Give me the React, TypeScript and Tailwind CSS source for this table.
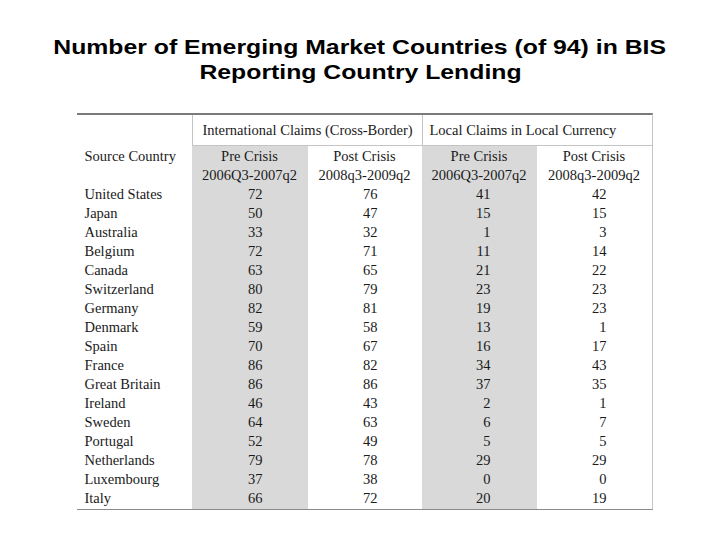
const rows: [string, number, number, number, number][] = [
  ["United States", 72, 76, 41, 42],
  ["Japan", 50, 47, 15, 15],
  ["Australia", 33, 32, 1, 3],
  ["Belgium", 72, 71, 11, 14],
  ["Canada", 63, 65, 21, 22],
  ["Switzerland", 80, 79, 23, 23],
  ["Germany", 82, 81, 19, 23],
  ["Denmark", 59, 58, 13, 1],
  ["Spain", 70, 67, 16, 17],
  ["France", 86, 82, 34, 43],
  ["Great Britain", 86, 86, 37, 35],
  ["Ireland", 46, 43, 2, 1],
  ["Sweden", 64, 63, 6, 7],
  ["Portugal", 52, 49, 5, 5],
  ["Netherlands", 79, 78, 29, 29],
  ["Luxembourg", 37, 38, 0, 0],
  ["Italy", 66, 72, 20, 19],
];

const App = () => {
  return (
    <div className="w-[720px] h-[540px] bg-white flex flex-col items-center overflow-hidden">
      <h1 className="mt-[34px] text-center font-bold text-[21px] leading-[25px] text-black font-['Liberation_Sans',Arial,sans-serif]">
        <span className="inline-block scale-x-[1.18]">
          Number of Emerging Market Countries (of 94) in BIS
        </span>
        <br />
        <span className="inline-block scale-x-[1.18]">Reporting Country Lending</span>
      </h1>

      <div className="mt-[29px] ml-[9px] grid grid-cols-[115px_116px_114px_115px_115px] border-t-2 border-t-[#7a7a7a] border-r border-r-[#c4c4c4] border-b-[1.5px] border-b-[#8a8a8a] text-[14.5px] leading-[19px] text-[#1a1a1a] font-['Liberation_Serif','Times_New_Roman',serif]">
        {/* group headers */}
        <div className="h-[31px]" />
        <div className="col-span-2 h-[31px] flex items-center pl-[10px] border-l border-b border-[#c4c4c4]">
          International Claims (Cross-Border)
        </div>
        <div className="col-span-2 h-[31px] flex items-center pl-[7px] border-l border-b border-[#c4c4c4]">
          Local Claims in Local Currency
        </div>

        {/* column headers */}
        <div className="pl-[8px] pt-[1px]">Source Country</div>
        <div className="bg-[#d9d9d9] text-center pt-[1px]">
          Pre Crisis
          <br />
          2006Q3-2007q2
        </div>
        <div className="text-center pt-[1px]">
          Post Crisis
          <br />
          2008q3-2009q2
        </div>
        <div className="bg-[#d9d9d9] text-center pt-[1px]">
          Pre Crisis
          <br />
          2006Q3-2007q2
        </div>
        <div className="text-center pt-[1px]">
          Post Crisis
          <br />
          2008q3-2009q2
        </div>

        {rows.map(([name, a, b, c, d], i) => (
          <div key={name} className="contents">
            <div className={`pl-[8px] h-[19px] ${i === rows.length - 1 ? "mb-[1px]" : ""}`}>{name}</div>
            <div className="bg-[#d9d9d9] text-right pr-[45px]">{a}</div>
            <div className="text-right pr-[44px]">{b}</div>
            <div className="bg-[#d9d9d9] text-right pr-[46px]">{c}</div>
            <div className="text-right pr-[45px]">{d}</div>
          </div>
        ))}
      </div>
    </div>
  );
};

export default App;
